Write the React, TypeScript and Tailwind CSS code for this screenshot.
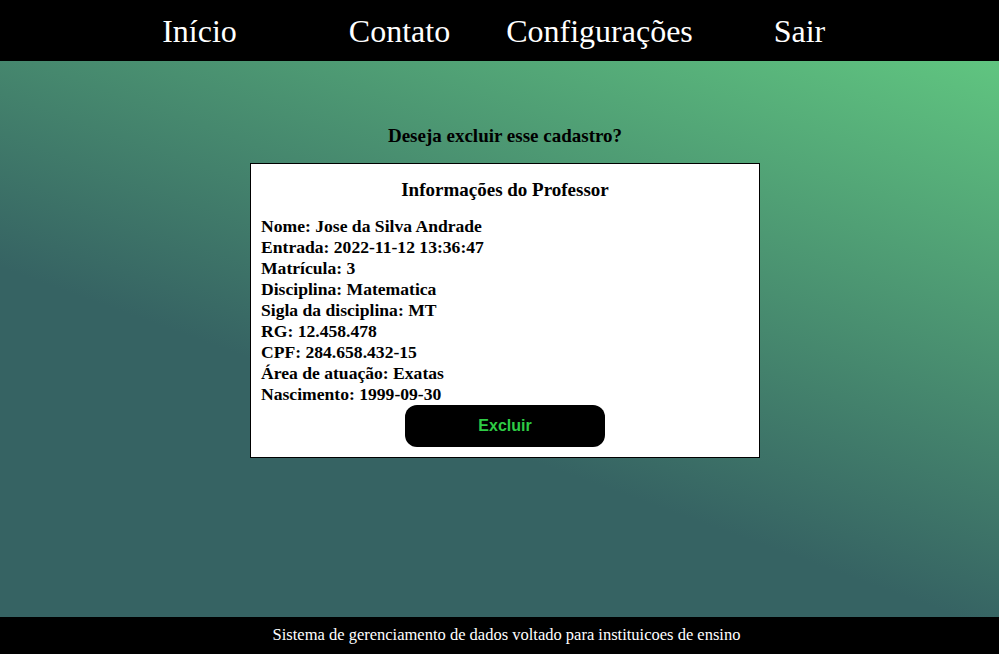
import React from "react";

export default function App() {
  const rows = [
    "Nome: Jose da Silva Andrade",
    "Entrada: 2022-11-12 13:36:47",
    "Matrícula: 3",
    "Disciplina: Matematica",
    "Sigla da disciplina: MT",
    "RG: 12.458.478",
    "CPF: 284.658.432-15",
    "Área de atuação: Exatas",
    "Nascimento: 1999-09-30",
  ];
  return (
    <div className="h-screen flex flex-col font-['Liberation_Serif',serif] text-black">
      <nav className="h-[61px] bg-black flex justify-center items-center shrink-0">
        {["Início", "Contato", "Configurações", "Sair"].map((t) => (
          <a key={t} className="w-[200px] text-center text-white text-[32px] leading-none">
            {t}
          </a>
        ))}
      </nav>
      <main className="flex-1 flex flex-col items-center pl-[11px] bg-[linear-gradient(200deg,#60c580_0%,#366363_62%)]">
        <h2 className="mt-[63px] text-[19px] font-bold leading-[24px]">Deseja excluir esse cadastro?</h2>
        <div className="mt-[15px] w-[510px] bg-white border border-black px-[10px] pt-[14px] pb-[10px] flex flex-col">
          <h3 className="text-center text-[19px] font-bold leading-[24px]">Informações do Professor</h3>
          <div className="mt-[14px] flex flex-col">
            {rows.map((r) => (
              <p key={r} className="text-[17.6px] font-bold leading-[21px]">{r}</p>
            ))}
          </div>
          <button className="self-center w-[200px] h-[42px] bg-black rounded-[12px] text-[#2ecc45] font-bold text-[16px] font-['Liberation_Sans',Arial,sans-serif]">
            Excluir
          </button>
        </div>
      </main>
      <footer className="h-[37px] bg-black shrink-0 flex items-center justify-center pl-[14px] text-white text-[16.5px]">
        Sistema de gerenciamento de dados voltado para instituicoes de ensino
      </footer>
    </div>
  );
}
